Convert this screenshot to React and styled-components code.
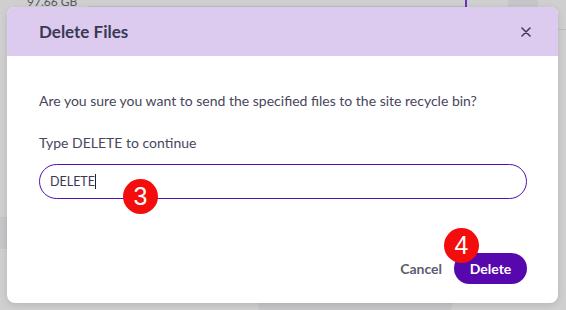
import React from "react";
import styled, { createGlobalStyle } from "styled-components";

const Global = createGlobalStyle`
  html, body { margin: 0; padding: 0; }
  body { font-family: Lato, "Noto Sans", sans-serif; background: #cfcfd0; }
`;

const Backdrop = styled.div`
  position: relative;
  width: 566px;
  height: 310px;
  overflow: hidden;
  background: #cfcfd0;
  padding: 7px 8px 7px 7px;
  box-sizing: border-box;
`;

// faint page content behind the overlay
const Behind = styled.div`
  position: absolute;
  inset: 0;
  pointer-events: none;
`;
const Size = styled.span`
  position: absolute;
  left: 27px;
  top: -6px;
  font-size: 12px;
  color: #56565e;
`;
const HLine = styled.div`
  position: absolute;
  left: ${(p) => p.x}px;
  top: ${(p) => p.y}px;
  width: ${(p) => p.w}px;
  height: 1px;
  background: #bdbdc0;
`;
const Accent = styled.div`
  position: absolute;
  left: 465px;
  top: 0;
  width: 2px;
  height: 7px;
  background: #6a35b8;
`;
const Block = styled.div`
  position: absolute;
  left: ${(p) => p.x}px;
  top: ${(p) => p.y}px;
  width: ${(p) => p.w}px;
  height: ${(p) => p.h}px;
  background: #c6c6c8;
  border-radius: ${(p) => p.r || 0}px;
`;

const Dialog = styled.div`
  position: relative;
  height: 100%;
  background: #fff;
  border-radius: 8px;
  box-shadow: 0 2px 6px rgba(0, 0, 0, 0.12);
  display: flex;
  flex-direction: column;
  overflow: hidden;
`;

const Header = styled.div`
  height: 49px;
  flex-shrink: 0;
  background: #dccbee;
  display: flex;
  align-items: center;
  justify-content: space-between;
  padding: 0 27px 0 32px;
`;

const Title = styled.h2`
  margin: 0;
  font-size: 17px;
  font-weight: 700;
  color: #3a3955;
`;

const Close = styled.button`
  border: 0;
  background: none;
  padding: 0;
  width: 10px;
  height: 10px;
  display: flex;
  cursor: pointer;
`;

const Body = styled.div`
  padding: 37px 31px 0 32px;
  display: flex;
  flex-direction: column;
  flex: 1;
`;

const Text = styled.p`
  margin: 0;
  font-size: 14px;
  color: #47465c;
  line-height: 16px;
`;

const Label = styled(Text)`
  margin-top: 26px;
`;

const Input = styled.div`
  margin-top: 13px;
  height: 35px;
  box-sizing: border-box;
  border: 1px solid #5310ad;
  border-radius: 18px;
  display: flex;
  align-items: center;
  padding: 0 10px;
  font-size: 12.5px;
  color: #3a3955;
`;

const Caret = styled.span`
  display: inline-block;
  width: 1px;
  height: 15px;
  background: #222;
`;

const Footer = styled.div`
  margin-top: auto;
  padding: 0 31px 19px 0;
  display: flex;
  justify-content: flex-end;
  align-items: center;
  gap: 12px;
`;

const CancelBtn = styled.button`
  border: 0;
  background: none;
  padding: 0;
  font-family: inherit;
  font-size: 14px;
  font-weight: 700;
  color: #5d5c70;
`;

const DeleteBtn = styled.button`
  border: 0;
  width: 73px;
  height: 31px;
  border-radius: 16px;
  background: #5608ae;
  color: #fff;
  font-family: inherit;
  font-size: 14px;
  font-weight: 700;
`;

const Badge = styled.div`
  position: absolute;
  left: ${(p) => p.x - 17}px;
  top: ${(p) => p.y - 17}px;
  width: 35px;
  height: 35px;
  border-radius: 50%;
  background: #f30d0d;
  color: #fff;
  font-family: "Liberation Sans", Arial, sans-serif;
  font-size: 25px;
  display: flex;
  align-items: center;
  justify-content: center;
`;

export default function App() {
  return (
    <>
      <Global />
      <Backdrop>
        <Behind>
          <Size>97.66 GB</Size>
          <HLine x={88} y={6} w={378} />
          <Accent />
          <Block x={508} y={0} w={30} h={7} />
          <HLine x={558} y={29} w={8} />
          <Block x={0} y={217} w={7} h={32} />
          <Block x={258} y={296} w={194} h={18} r={8} />
        </Behind>
        <Dialog>
          <Header>
            <Title>Delete Files</Title>
            <Close aria-label="Close">
              <svg width="10" height="10" viewBox="0 0 10 10">
                <path d="M1 1L9 9M9 1L1 9" stroke="#3a3955" strokeWidth="1.5" strokeLinecap="round" />
              </svg>
            </Close>
          </Header>
          <Body>
            <Text>Are you sure you want to send the specified files to the site recycle bin?</Text>
            <Label>Type DELETE to continue</Label>
            <Input>
              DELETE<Caret />
            </Input>
          </Body>
          <Footer>
            <CancelBtn>Cancel</CancelBtn>
            <DeleteBtn>Delete</DeleteBtn>
          </Footer>
        </Dialog>
        <Badge x={140} y={196}>3</Badge>
        <Badge x={461} y={245}>4</Badge>
      </Backdrop>
    </>
  );
}
